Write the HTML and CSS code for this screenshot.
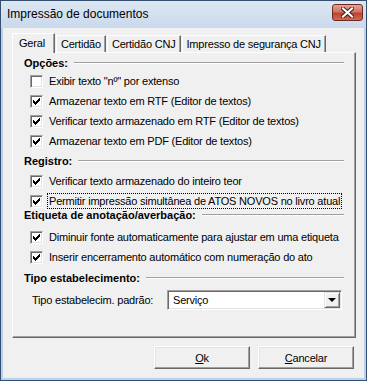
FILE: index.html
```html
<!doctype html>
<html>
	<head>
		<meta charset="utf-8" />
		<title>Impressão de documentos</title>
		<link rel="stylesheet" href="styles.css">
	</head>
	<body>
		<div class="window">
			<div class="titlebar">
				<span class="title">Impressão de documentos</span>
				<span class="close" title="Fechar">
					<svg width="13" height="11" viewBox="0 0 13 11">
						<path d="M2 1.5 L11 9.5 M11 1.5 L2 9.5" stroke="#3a1a16" stroke-width="4" stroke-linecap="square" />
						<path d="M2 1.5 L11 9.5 M11 1.5 L2 9.5" stroke="#fff" stroke-width="2.2" stroke-linecap="square" />
					</svg>
				</span>
			</div>
			<div class="client">
				<div class="tabs">
					<div class="tab active">Geral</div>
					<div class="tab">Certidão</div>
					<div class="tab">Certidão CNJ</div>
					<div class="tab">Impresso de segurança CNJ</div>
				</div>
				<div class="panel">
					<div class="grouplabel first"><span>Opções:</span></div>
					<label class="opt"><span class="box"></span><span>Exibir texto "nº" por extenso</span></label>
					<label class="opt"><span class="box checked"></span><span>Armazenar texto em RTF (Editor de textos)</span></label>
					<label class="opt"><span class="box checked"></span><span>Verificar texto armazenado em RTF (Editor de textos)</span></label>
					<label class="opt"><span class="box checked"></span><span>Armazenar texto em PDF (Editor de textos)</span></label>

					<div class="grouplabel"><span>Registro:</span></div>
					<label class="opt"><span class="box checked"></span><span>Verificar texto armazenado do inteiro teor</span></label>
					<label class="opt"><span class="box checked"></span><span class="focus">Permitir impressão simultânea de ATOS NOVOS no livro atual</span></label>

					<div class="grouplabel etiqueta"><span>Etiqueta de anotação/averbação:</span></div>
					<label class="opt"><span class="box checked"></span><span>Diminuir fonte automaticamente para ajustar em uma etiqueta</span></label>
					<label class="opt"><span class="box checked"></span><span>Inserir encerramento automático com numeração do ato</span></label>

					<div class="grouplabel tipo"><span>Tipo estabelecimento:</span></div>
					<div class="field">
						<span class="fieldlabel">Tipo estabelecim. padrão:</span>
						<span class="combo">
							<span class="combotext">Serviço</span>
							<span class="combobtn"><span class="arrow"></span></span>
						</span>
					</div>
				</div>
				<div class="actions">
					<button class="btn"><u>O</u>k</button>
					<button class="btn"><u>C</u>ancelar</button>
				</div>
			</div>
		</div>
	</body>
</html>
```

FILE: styles.css
```css
body {
	margin: 0;
	background-color: #fff;
	font-family: "Liberation Sans", Arial, sans-serif;
	font-size: 11px;
	letter-spacing: -0.2px;
	color: #000;
}
.window {
	width: 367px;
	height: 381px;
	box-sizing: border-box;
	border: 1px solid #34506e;
	background: #b9d1ea;
	padding: 0 2px 2px 2px;
	display: flex;
	flex-direction: column;
}
.titlebar {
	height: 27px;
	margin: 0 -2px;
	padding: 0 3px 0 6px;
	display: flex;
	align-items: center;
	justify-content: space-between;
	background: linear-gradient(#dde7f3, #c9d9ec);
}
.title {
	font-size: 12px;
	letter-spacing: 0;
	margin-top: -1px;
}
.close {
	width: 31px;
	height: 17px;
	margin-top: -4px;
	box-sizing: border-box;
	border: 1px solid #6e2b22;
	border-radius: 3px;
	background: linear-gradient(#e6a195 0%, #d07565 45%, #c2412f 55%, #cf6a52 100%);
	display: flex;
	align-items: center;
	justify-content: center;
}
.client {
	flex: 1;
	background: #f0f0f0;
	padding: 5px 8px 0 9px;
	display: flex;
	flex-direction: column;
}
.tabs {
	display: flex;
	align-items: flex-end;
	height: 19px;
}
.tab {
	height: 17px;
	box-sizing: border-box;
	padding: 2px 4px 0 4px;
	border-top: 1px solid #fff;
	border-left: 1px solid #fff;
	border-right: 1px solid #696969;
	box-shadow: inset -1px 0 0 #a0a0a0;
	margin-left: 1px;
	white-space: nowrap;
}
.tab.active {
	height: 20px;
	margin-left: 0;
	margin-bottom: -1px;
	padding: 3px 9px 0 6px;
	background: #f0f0f0;
	position: relative;
	z-index: 1;
}
.panel {
	height: 286px;
	box-sizing: border-box;
	border-top: 1px solid #fff;
	border-left: 1px solid #fff;
	border-right: 1px solid #696969;
	border-bottom: 1px solid #696969;
	box-shadow: inset -1px -1px 0 #a0a0a0;
	padding: 0 11px 0 11px;
}
.grouplabel {
	display: flex;
	align-items: center;
	height: 20px;
	font-weight: bold;
	letter-spacing: 0;
}
.grouplabel.first {
	height: 16px;
	margin-top: 2px;
}
.grouplabel.etiqueta {
	height: 12px;
	margin: -2px 0 6px 0;
}
.grouplabel.tipo {
	height: 22px;
}
.grouplabel::after {
	content: "";
	flex: 1;
	margin-left: 6px;
	border-top: 1px solid #a0a0a0;
	border-bottom: 1px solid #fff;
}
.opt {
	display: flex;
	align-items: center;
	height: 20px;
	padding-left: 6px;
	white-space: nowrap;
}
.box {
	width: 13px;
	height: 13px;
	box-sizing: border-box;
	margin-right: 6px;
	background: #fff;
	border-top: 1px solid #a0a0a0;
	border-left: 1px solid #a0a0a0;
	border-right: 1px solid #fff;
	border-bottom: 1px solid #fff;
	box-shadow: inset 1px 1px 0 #696969, inset -1px -1px 0 #e3e3e3;
	display: flex;
	align-items: center;
	justify-content: center;
}
.box.checked::before {
	content: "";
	width: 7px;
	height: 7px;
	background: url("data:image/svg+xml;utf8,<svg xmlns='http://www.w3.org/2000/svg' width='7' height='7' shape-rendering='crispEdges'><path d='M6 0h1v3h-1zM5 1h1v3h-1zM4 2h1v3h-1zM3 3h1v3h-1zM2 4h1v3h-1zM1 3h1v3h-1zM0 2h1v3h-1z' fill='%23000'/></svg>") no-repeat;
}
.focus {
	outline: 1px dotted #000;
	outline-offset: 1px;
}
.field {
	display: flex;
	align-items: center;
	height: 22px;
	padding-left: 8px;
}
.fieldlabel {
	width: 135px;
}
.combo {
	width: 175px;
	height: 20px;
	box-sizing: border-box;
	background: #fff;
	border-top: 1px solid #a0a0a0;
	border-left: 1px solid #a0a0a0;
	border-right: 1px solid #fff;
	border-bottom: 1px solid #fff;
	box-shadow: inset 1px 1px 0 #696969, inset -1px -1px 0 #e3e3e3;
	display: flex;
	align-items: center;
	padding: 1px 1px 1px 2px;
}
.combotext {
	flex: 1;
	padding-left: 3px;
}
.combobtn {
	width: 16px;
	height: 16px;
	box-sizing: border-box;
	background: #f0f0f0;
	border-top: 1px solid #e3e3e3;
	border-left: 1px solid #e3e3e3;
	border-right: 1px solid #696969;
	border-bottom: 1px solid #696969;
	box-shadow: inset 1px 1px 0 #fff, inset -1px -1px 0 #a0a0a0;
	display: flex;
	align-items: center;
	justify-content: center;
}
.arrow {
	width: 0;
	height: 0;
	border-left: 4px solid transparent;
	border-right: 4px solid transparent;
	border-top: 4px solid #000;
}
.actions {
	display: flex;
	justify-content: flex-end;
	gap: 8px;
	padding-top: 8px;
	padding-right: 2px;
}
.btn {
	width: 96px;
	height: 23px;
	font-family: "Liberation Sans", Arial, sans-serif;
	font-size: 11px;
	letter-spacing: -0.2px;
	background: #f0f0f0;
	border-top: 1px solid #fff;
	border-left: 1px solid #fff;
	border-right: 1px solid #696969;
	border-bottom: 1px solid #696969;
	box-shadow: inset -1px -1px 0 #a0a0a0, inset 1px 1px 0 #e3e3e3;
	padding: 0;
}
```
